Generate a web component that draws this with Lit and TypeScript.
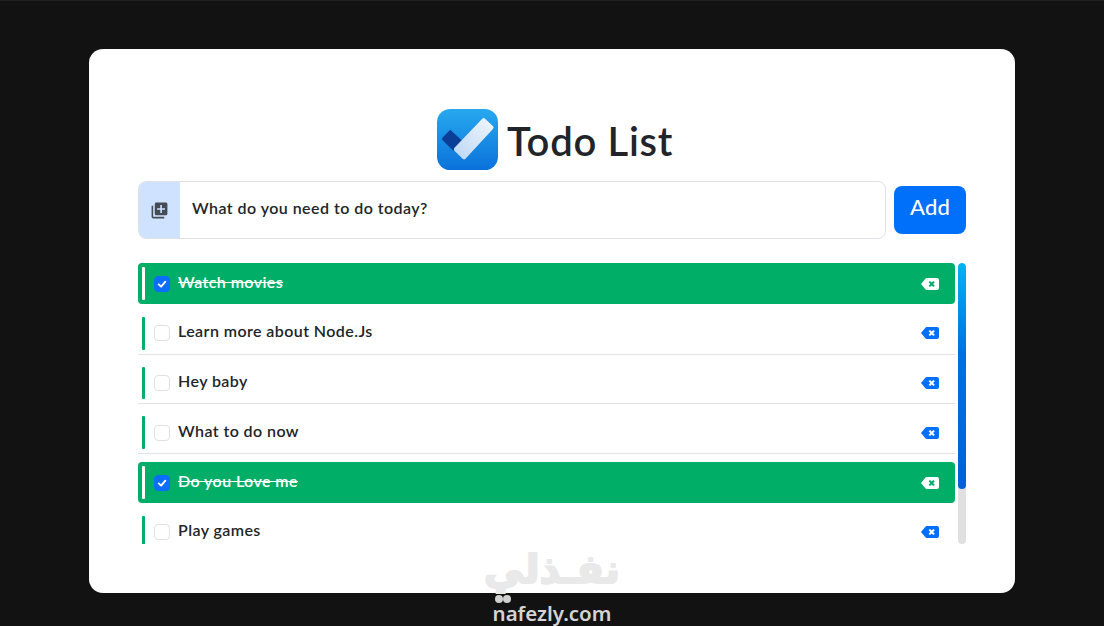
import { LitElement, html, css, svg } from "lit";
import { customElement } from "lit/decorators.js";

const todos = [
  { text: "Watch movies", done: true },
  { text: "Learn more about Node.Js", done: false },
  { text: "Hey baby", done: false },
  { text: "What to do now", done: false },
  { text: "Do you Love me", done: true },
  { text: "Play games", done: false },
];

const delIcon = html`<svg class="del" viewBox="0 0 18 12" aria-hidden="true">
  <path fill-rule="evenodd" d="M5.6 0H16a2 2 0 0 1 2 2v8a2 2 0 0 1-2 2H5.6a1.5 1.5 0 0 1-1-.45L0 6l4.6-5.55A1.5 1.5 0 0 1 5.6 0zM9 2.9 7.6 4.3 9.3 6 7.6 7.7 9 9.1 10.7 7.4 12.4 9.1 13.8 7.7 12.1 6 13.8 4.3 12.4 2.9 10.7 4.6z"/>
</svg>`;

@customElement("app-root")
export class AppRoot extends LitElement {
  static styles = css`
    :host {
      display: block;
      position: relative;
      width: 1104px;
      height: 626px;
      box-sizing: border-box;
      padding-top: 48px;
      border-top: 1px solid #1f1f1f;
      background: #121212;
      overflow: hidden;
      font-family: "Lato", "Liberation Sans", sans-serif;
      color: #212529;
    }
    .card {
      width: 926px;
      height: 544px;
      box-sizing: border-box;
      margin: 0 auto;
      padding: 60px 49px 49px;
      background: #fff;
      border-radius: 14px;
      display: flex;
      flex-direction: column;
    }
    .title {
      display: flex;
      justify-content: center;
      align-items: center;
      gap: 9px;
      height: 61px;
      margin-bottom: 11px;
      padding-left: 6px;
    }
    .logo { width: 61px; height: 61px; display: block; }
    h1 {
      margin: 0;
      font-size: 40px;
      font-weight: 600;
      letter-spacing: 0.7px;
      line-height: 1;
      color: #212529;
      padding-top: 3px;
    }
    .form {
      display: flex;
      align-items: center;
      gap: 8px;
      margin-bottom: 24px;
    }
    .input {
      flex: 1;
      height: 58px;
      box-sizing: border-box;
      display: flex;
      align-items: stretch;
      border: 1px solid #dee2e6;
      border-radius: 8px;
      overflow: hidden;
    }
    .addon {
      width: 41px;
      background: #cfe2ff;
      display: flex;
      align-items: center;
      justify-content: center;
      padding-top: 1px;
      box-sizing: border-box;
    }
    .addon svg { width: 19px; height: 19px; fill: #454b55; }
    .placeholder {
      flex: 1;
      display: flex;
      align-items: center;
      padding-left: 12px;
      font-size: 16px;
      font-weight: 600;
      letter-spacing: 0.45px;
      padding-bottom: 5px;
    }
    .add {
      width: 72px;
      height: 48px;
      border: 0;
      border-radius: 8px;
      background: #0070fb;
      color: #fff;
      font: inherit;
      font-size: 22px;
      font-weight: 500;
      letter-spacing: 0.2px;
      padding: 0 0 7px;
    }
    .scroll {
      flex: 1;
      min-height: 0;
      display: flex;
      gap: 3px;
    }
    .list {
      flex: 1;
      overflow: hidden;
      display: flex;
      flex-direction: column;
      gap: 8px;
    }
    .row {
      flex: none;
      height: 41.75px;
      box-sizing: border-box;
      display: flex;
      align-items: stretch;
      padding: 4px 16px 4px 4px;
      border-bottom: 1px solid #e2e3e5;
    }
    .row.done {
      height: 41px;
      margin-bottom: 0.75px;
      background: #00ae68;
      border-bottom: 0;
      border-radius: 4px;
      color: #fff;
    }
    .bar { width: 3px; background: #00ae68; border-radius: 1px; margin-right: 9px; }
    .done .bar { background: #fff; }
    .check {
      align-self: center;
      width: 16px;
      height: 16px;
      box-sizing: border-box;
      border: 1px solid #dfe1e3;
      border-radius: 4px;
      background: #fff;
      margin-right: 8px;
      display: flex;
      align-items: center;
      justify-content: center;
    }
    .done .check { background: #0d6efd; border-color: #0d6efd; }
    .check svg { width: 10px; height: 10px; fill: none; stroke: #fff; stroke-width: 2.2; stroke-linecap: round; stroke-linejoin: round; }
    .text {
      flex: 1;
      align-self: center;
      font-size: 16px;
      font-weight: 600;
      letter-spacing: 0.42px;
      line-height: 20px;
      padding-bottom: 4px;
    }
    .done .text { text-decoration: line-through; }
    .del { align-self: center; width: 18px; height: 12px; fill: #0070fb; flex: none; }
    .done .del { fill: #fff; }
    .track {
      width: 8px;
      background: #e0e0e0;
      border-radius: 4px;
      overflow: hidden;
    }
    .thumb {
      height: 226px;
      border-radius: 4px;
      background: linear-gradient(180deg, #00b4f2 0%, #0070e0 40%, #0062d6 100%);
    }
    .mark {
      position: absolute;
      left: 486px;
      top: 545px;
      width: 132px;
      display: flex;
      flex-direction: column;
      align-items: center;
      pointer-events: none;
    }
    .ar {
      font-family: "DejaVu Sans", sans-serif;
      font-weight: 700;
      font-size: 40px;
      line-height: 46px;
      color: #e9e9e9;
      -webkit-text-stroke: 2px #e9e9e9;
      white-space: nowrap;
    }
    .dots { align-self: flex-start; display: flex; margin: 3px 0 -1px 9px; }
    .dots i { width: 8px; height: 8px; border-radius: 50%; background: #d0d0d0; }
    .en {
      font-family: "Noto Sans", sans-serif;
      font-weight: 600;
      font-size: 20.5px;
      line-height: 22px;
      color: #d4d4d4;
      white-space: nowrap;
    }
  `;

  render() {
    return html`
      <main class="card">
        <div class="title">
          <svg class="logo" viewBox="0 0 60 60" aria-hidden="true">
            <defs>
              <linearGradient id="bg" x1="0" y1="0" x2="0" y2="1">
                <stop offset="0" stop-color="#27a8ee" />
                <stop offset="1" stop-color="#0a72db" />
              </linearGradient>
              <linearGradient id="lt" x1="1" y1="0" x2="0" y2="1">
                <stop offset="0" stop-color="#f0f6fd" />
                <stop offset="1" stop-color="#bcd6f3" />
              </linearGradient>
            </defs>
            <rect width="60" height="60" rx="13" fill="url(#bg)" />
            ${svg`<path d="M13 20.5 5.5 28a2 2 0 0 0 0 2.8L16 41l9-9.5z" fill="#0b3f97" />
            <path d="M44.5 9.5a2 2 0 0 1 2.8 0l7.7 7.3a2 2 0 0 1 0 2.8L28 49a2 2 0 0 1-2.8 0l-8-8a2 2 0 0 1 0-2.8z" fill="url(#lt)" />`}
          </svg>
          <h1>Todo List</h1>
        </div>
        <div class="form">
          <div class="input">
            <div class="addon">
              <svg viewBox="0 0 24 24" aria-hidden="true"><path d="M4 6H2v14c0 1.1.9 2 2 2h14v-2H4V6zm16-4H8c-1.1 0-2 .9-2 2v12c0 1.1.9 2 2 2h12c1.1 0 2-.9 2-2V4c0-1.1-.9-2-2-2zm-1 9h-4v4h-2v-4H9V9h4V5h2v4h4v2z"/></svg>
            </div>
            <div class="placeholder">What do you need to do today?</div>
          </div>
          <button class="add">Add</button>
        </div>
        <div class="scroll">
          <div class="list">
            ${todos.map(
              (t) => html`<div class="row ${t.done ? "done" : ""}">
                <span class="bar"></span>
                <span class="check">${t.done
                  ? html`<svg viewBox="0 0 12 12" aria-hidden="true"><path d="M2 6.5 5 9.2 10 3.2"/></svg>`
                  : ""}</span>
                <span class="text">${t.text}</span>
                ${delIcon}
              </div>`
            )}
          </div>
          <div class="track"><div class="thumb"></div></div>
        </div>
      </main>
      <div class="mark">
        <div class="ar">نفـذلي</div>
        <div class="dots"><i></i><i></i></div>
        <div class="en">nafezly.com</div>
      </div>
    `;
  }
}
